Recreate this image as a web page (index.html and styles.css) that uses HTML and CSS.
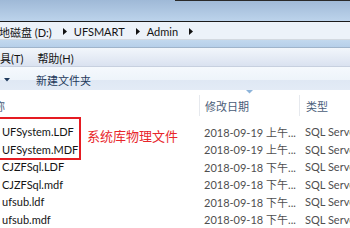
FILE: index.html
```html
<!DOCTYPE html>
<html lang="zh-CN">
<head>
<meta charset="utf-8">
<title>UFSMART Admin</title>
<link rel="stylesheet" href="styles.css">
</head>
<body>
<div class="window">
  <div class="titlebar"></div>
  <div class="addressbar">
    <span class="crumb first">本地磁盘 (D:)</span>
    <svg class="sep" width="4" height="7" viewBox="0 0 4 7"><path d="M0 0 L4 3.5 L0 7 Z" fill="#111"/></svg>
    <span class="crumb">UFSMART</span>
    <svg class="sep" width="4" height="7" viewBox="0 0 4 7"><path d="M0 0 L4 3.5 L0 7 Z" fill="#111"/></svg>
    <span class="crumb">Admin</span>
    <svg class="sep" width="4" height="7" viewBox="0 0 4 7"><path d="M0 0 L4 3.5 L0 7 Z" fill="#111"/></svg>
  </div>
  <div class="band"></div>
  <div class="menubar">
    <span class="menu first">工具(T)</span>
    <span class="menu">帮助(H)</span>
  </div>
  <div class="toolbar">
    <svg class="drop" width="6" height="4" viewBox="0 0 6 4"><path d="M0 0 L6 0 L3 3.5 Z" fill="#1e395b"/></svg>
    <span class="tool">新建文件夹</span>
  </div>
  <div class="list">
    <div class="header">
      <div class="hcell name"><span class="cut">名称</span></div>
      <div class="hcell date">
        <svg class="sort" width="7" height="4" viewBox="0 0 7 4"><path d="M0 0 L7 0 L3.5 3.5 Z" fill="#8db4da"/></svg>
        修改日期
      </div>
      <div class="hcell type">类型</div>
    </div>
    <div class="rows">
      <div class="row"><span class="name">UFSystem.LDF</span><span class="date">2018-09-19 上午...</span><span class="type">SQL Server Database Transaction Log File</span></div>
      <div class="row"><span class="name">UFSystem.MDF</span><span class="date">2018-09-19 上午...</span><span class="type">SQL Server Database Primary Data File</span></div>
      <div class="row"><span class="name">CJZFSql.LDF</span><span class="date">2018-09-18 下午...</span><span class="type">SQL Server Database Transaction Log File</span></div>
      <div class="row"><span class="name">CJZFSql.mdf</span><span class="date">2018-09-18 下午...</span><span class="type">SQL Server Database Primary Data File</span></div>
      <div class="row"><span class="name">ufsub.ldf</span><span class="date">2018-09-18 下午...</span><span class="type">SQL Server Database Transaction Log File</span></div>
      <div class="row"><span class="name">ufsub.mdf</span><span class="date">2018-09-18 下午...</span><span class="type">SQL Server Database Primary Data File</span></div>
    </div>
    <div class="highlight"></div>
    <div class="note">系统库物理文件</div>
  </div>
</div>
</body>
</html>
```
FILE: styles.css
```css
* { box-sizing: border-box; }
html, body { margin: 0; padding: 0; }
body {
  width: 350px;
  height: 228px;
  overflow: hidden;
  background: #fff;
  font-family: Lato, "Noto Sans CJK SC", sans-serif;
  font-size: 11px;
  color: #1a1a1a;
}
.window { width: 350px; height: 228px; overflow: hidden; }

.titlebar {
  height: 21px;
  background:
    linear-gradient(to right, transparent 50%, #2a2a2a 50%) top / 100% 1px no-repeat,
    linear-gradient(#9fb9d7, #bcd3eb);
}

.addressbar {
  height: 19px;
  padding-top: 2px;
  border-top: 1px solid #1b1b1b;
  border-bottom: 1px solid #d3d9e0;
  background: #ecf2f9;
  display: flex;
  align-items: center;
  white-space: nowrap;
  color: #141414;
}
.addressbar .first { margin-left: -12px; }
.addressbar .sep { flex: none; margin: 0 7px 0 11px; }

.band {
  height: 8px;
  background: linear-gradient(#c2d8ee, #b6cfe9);
  border-bottom: 1px solid #9fb4cb;
}

.menubar {
  height: 19px;
  padding-top: 2px;
  background: linear-gradient(#f2f6fb, #dae2f0);
  border-bottom: 1px solid #c7d0df;
  display: flex;
  align-items: center;
  gap: 14px;
  white-space: nowrap;
  color: #141414;
}
.menubar .first { margin-left: -11px; }

.toolbar {
  height: 23px;
  background: linear-gradient(#f5f9fd 0, #eef4fa 55%, #dfe8f4 56%, #e3ebf6 100%);
  display: flex;
  align-items: center;
  padding-top: 2px;
  color: #1e395b;
}
.toolbar .drop { margin-left: 4px; margin-right: 26px; flex: none; }

.list { position: relative; }

.header {
  height: 33px;
  padding-bottom: 2px;
  display: grid;
  grid-template-columns: 199px 100px 51px;
  align-items: center;
  color: #4a5d78;
  white-space: nowrap;
  overflow: hidden;
}
.hcell { height: 21px; display: flex; align-items: center; }
.hcell.name { overflow: hidden; }
.hcell.name .cut { margin-left: -17px; }
.hcell.date, .hcell.type { border-left: 1px solid #e6e9ee; position: relative; }
.hcell.date { padding-left: 5px; }
.hcell.type { padding-left: 6px; }
.sort { position: absolute; top: -5px; left: 46px; }

.rows { display: flex; flex-direction: column; }
.row {
  height: 17.5px;
  display: grid;
  grid-template-columns: 199px 100px 51px;
  align-items: center;
  white-space: nowrap;
}
.row span { overflow: hidden; }
.row .name { padding-left: 2px; color: #141414; }
.row .date { padding-left: 5px; color: #4f4f4f; }
.row .type { padding-left: 6px; color: #4f4f4f; }

.highlight {
  position: absolute;
  left: -4px;
  top: 27px;
  width: 85px;
  height: 43px;
  border: 2px solid #e51b22;
}
.note {
  position: absolute;
  left: 87px;
  top: 38px;
  font-size: 13px;
  line-height: 16px;
  color: #e8262b;
  font-family: "Noto Sans CJK SC", sans-serif;
  white-space: nowrap;
}
```
